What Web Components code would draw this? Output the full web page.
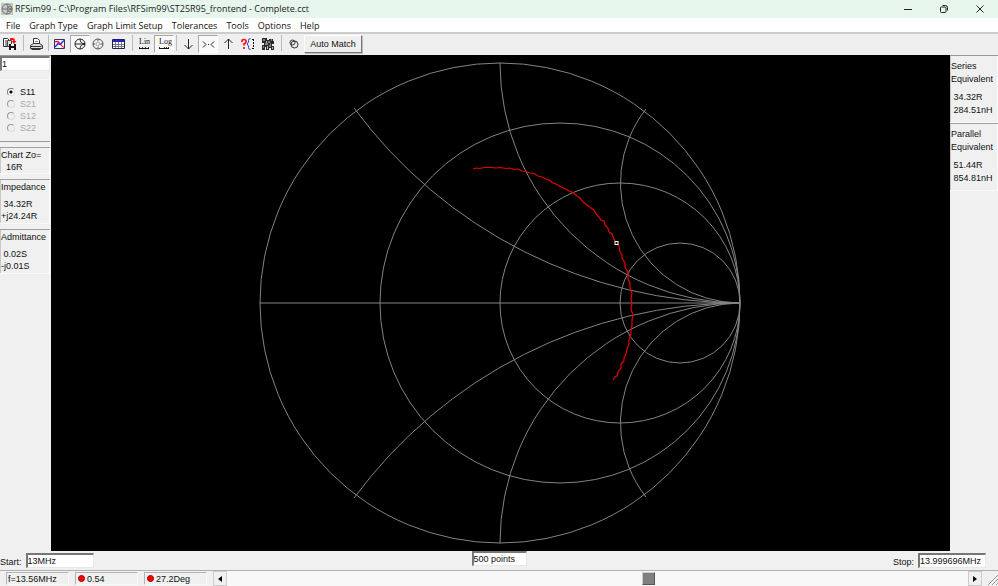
<!DOCTYPE html>
<html lang="en">
<head>
<meta charset="utf-8">
<title>RFSim99</title>
<style>
html,body{height:100%;margin:0}
body{font:9px/12px "Liberation Sans",Arial,sans-serif;color:#111;background:#f0f0f0;--ui:"Open Sans","Noto Sans",sans-serif}
</style>
</head>
<body>
<rf-app></rf-app>
<script>
const define = (name, html, setup) => {
  const tpl = document.createElement('template');
  tpl.innerHTML = html;
  customElements.define(name, class extends HTMLElement {
    constructor() {
      super();
      this.attachShadow({mode: 'open'}).appendChild(tpl.content.cloneNode(true));
    }
    connectedCallback() { if (setup) setup(this, this.shadowRoot); }
  });
};

define('rf-titlebar', `
<style>
:host{display:flex;align-items:center;height:18px;background:#e6f6ec;font:9px/18px var(--ui);color:#1b1b1b}
.app{width:12px;height:12px;margin:0 2px 0 1px;flex:none}
h1{font:inherit;margin:0;flex:1;white-space:nowrap;overflow:hidden}
button{width:36px;height:18px;padding:0;border:0;background:none;display:grid;place-items:center}
</style>
<svg class="app" viewBox="0 0 12 12"><rect width="12" height="12" fill="#c4c8c5"/><g fill="none" stroke="#777"><circle cx="6" cy="6" r="5"/><path d="M1 6h10M6 1q0 4 5 5q-5 1-5 5"/><circle cx="8.500" cy="6" r="2.500"/></g></svg>
<h1><slot></slot></h1>
<button aria-label="Minimize"><svg width="10" height="10"><path d="M1 5.500h8" stroke="#222"/></svg></button>
<button aria-label="Restore"><svg width="10" height="10" fill="none" stroke="#222"><rect x="1.500" y="3" width="5.500" height="5.500" rx="1"/><path d="M3.500 1.500h3q2 0 2 2v3"/></svg></button>
<button aria-label="Close"><svg width="10" height="10"><path d="M1.500 1.500l7 7m0-7l-7 7" stroke="#222"/></svg></button>`);

define('rf-menubar', `
<style>
:host{display:flex;gap:9px;height:14px;padding:0 6px;background:#fff;border-bottom:2px solid #ccc;font:9px/15px var(--ui)}
::slotted(button){font:inherit;color:#111;background:none;border:0;padding:0;white-space:nowrap}
</style><slot></slot>`);

const icons = {
  copy: '<path d="M1.500 2.500h4l2 2v6h-6z" fill="#fff" stroke="#333"/><path d="M3 5h2M3 7h3M3 9h2" stroke="#333"/><path d="M5.500 4.500h4v6h-4z" fill="#ddd" stroke="#444"/><path d="M8 2h3q2 0 2 3h1.500L12 8L9.500 5H11V4H8z" fill="#f11"/><path d="M7 8h7v6H7z" fill="#111"/><path d="M9 8h3v2H9zM9 12h3v2H9z" fill="#fff"/>',
  print: '<path d="M5.500 8V2.500h4l2 2V8" fill="#fff" stroke="#333"/><path d="M7 5.500h3M7 7.500h3" stroke="#888"/><path d="M2.500 9.500l3-2h6l3 2v3h-12z" fill="#ddd" stroke="#333"/><path d="M2.500 10.500h11M3.500 13.500h9" stroke="#333" fill="none"/>',
  graph: '<path d="M2.500 3.500h10v9h-10z" fill="#fff" stroke="#335"/><path d="M3 8h9M6 4v8M9.500 4v8" stroke="#dde8f4" fill="none"/><path d="M3 6q3-1.500 5 1.500t4 4" stroke="#f11" stroke-width="1.300" fill="none"/><path d="M3 11L6 7.500l2 1L12 4.500" stroke="#22e" stroke-width="1.300" fill="none"/>',
  smith: '<g fill="none" stroke="#222"><circle cx="8" cy="8" r="5"/><path d="M3 8h10M8 3q0 4.500 5 5q-5 .5-5 5"/></g>',
  polar: '<g fill="none" stroke="#555"><circle cx="6" cy="8" r="5"/><circle cx="6" cy="8" r="2" stroke-dasharray="1 1"/><path d="M1 8h2M9 8h2M6 3v2M6 11v2"/></g>',
  table: '<path d="M.5 3.500h12v9H.5z" fill="#fff" stroke="#224"/><path d="M1 4h11v2H1z" fill="#22c"/><path d="M1 8.500h11M1 10.500h11M3.500 6v6M6.500 6v6M9.500 6v6" stroke="#778"/>',
  lin: '<path d="M3 12.500h10" stroke="#111"/><path d="M3.500 11v1M6.500 11v1M9.500 11v1M12.500 11v1" stroke="#333"/>',
  log: '<path d="M3 12.500h10" stroke="#111"/><path d="M3.500 11v1M8.500 11v1M10.500 11v1M12.500 11v1" stroke="#333"/>',
  down: '<path d="M8.500 3v10M4.500 9l4 4l4-4" fill="none" stroke="#222"/>',
  merge: '<path d="M3 5.500l3 3l-3 3M14 5.500l-3 3l3 3M8 8.500h1" fill="none" stroke="#222"/>',
  up: '<path d="M8.500 13V3M4.500 7l4-4l4 4" fill="none" stroke="#222"/>',
  query: '<path d="M2 6V5Q2 3.500 4 3.500t2 2t-2 2.500v1.500M4 11v2" fill="none" stroke="#f11" stroke-width="1.700"/><path d="M10.500 2.500q-2 0-2 2V6L7 8l1.500 2v1.500q0 2 2 2" fill="none" stroke="#33d"/><path d="M12 3.500h2M12 12.500h2" stroke="#111"/><path d="M13.500 3v10" stroke="#111" stroke-dasharray="2 1"/>',
  blocks: '<path d="M2 2h5v2h2V3h4v2h1v3h-2v2h2v4h-3v-2H9v2H6v-3H5v3H2V9h2V7H2z" fill="#2a2a2a"/><path d="M3 4h2M8 6h2M11 4h1M5 8h3M9 10h2M3 11h1M10 8h1" stroke="#ddd"/><path d="M6.500 5v2M12.500 11v2M7.500 10v3" stroke="#bbb"/>',
  tune: '<g fill="none" stroke="#333"><circle cx="6.500" cy="6.500" r="2.500"/><circle cx="8.500" cy="8.500" r="3.500"/></g>'
};
define('rf-tool', `
<style>
:host{display:block;width:20px;height:18px;flex:none}
button{box-sizing:border-box;width:100%;height:100%;padding:0;border:1px solid transparent;background:none;display:grid;place-items:center}
:host([pressed]) button{background:#f9f9f9;border-color:#a8a8a8 #fff #fff #a8a8a8}
svg{width:16px;height:16px}
text{font:8px "Liberation Serif",serif;fill:#111}
</style><button><svg viewBox="0 0 16 16"></svg></button>`, (el, root) => {
  const name = el.getAttribute('icon'), cap = el.getAttribute('caption');
  root.querySelector('button').setAttribute('aria-label', name);
  root.querySelector('svg').innerHTML = icons[name] + (cap ? '<text x="3" y="8">' + cap + '</text>' : '');
});

define('rf-toolbar', `
<style>
:host{box-sizing:border-box;display:flex;align-items:flex-start;height:21px;padding-top:1px;background:#efefef}
i{width:6px;height:16px;flex:none;background:linear-gradient(#bbb,#bbb) center/1px 100% no-repeat}
i.s{width:4px}
.match{height:18px;width:58px;margin:0;padding:0;font:inherit;color:inherit;background:#efefef;border:1px solid;border-color:#fff #777 #777 #fff;box-shadow:1px 1px #bbb;white-space:nowrap}
</style>
<rf-tool icon="copy"></rf-tool><i></i><rf-tool icon="print"></rf-tool><i class="s"></i>
<rf-tool icon="graph"></rf-tool><rf-tool icon="smith" pressed></rf-tool><rf-tool icon="polar"></rf-tool><rf-tool icon="table"></rf-tool><i class="s"></i>
<rf-tool icon="lin" caption="Lin"></rf-tool><rf-tool icon="log" caption="Log" pressed></rf-tool><i class="s"></i>
<rf-tool icon="down"></rf-tool><rf-tool icon="merge" pressed></rf-tool><rf-tool icon="up"></rf-tool><rf-tool icon="query"></rf-tool><rf-tool icon="blocks"></rf-tool><i></i>
<rf-tool icon="tune"></rf-tool><button class="match">Auto Match</button>`);

define('rf-readout', `
<style>
:host{display:block;padding:1px 0 2px 1px;border-top:1px solid #a0a0a0;box-shadow:inset -1px -1px #fafafa,inset 1px 0 #c8c8c8;white-space:nowrap}
.v{margin-top:5px}
:host([tight]) .v{margin-top:0}
::slotted(div){white-space:pre}
</style><slot name="title"></slot><div class="v"><slot></slot></div>`);

define('rf-field', `
<style>
:host{display:flex;gap:4px;align-items:flex-end}
label:empty{display:none}
label{line-height:12px}
input{box-sizing:border-box;width:var(--w,68px);height:15px;padding:0 0 1px 0;font:inherit;line-height:12px;color:inherit;background:#fff;border:1px solid;border-color:#777 #e8e8e8 #e8e8e8 #777;border-width:2px 1px 1px 2px;border-radius:0;outline:0}
</style><label for="f"></label><input id="f">`, (el, root) => {
  root.querySelector('label').textContent = el.getAttribute('label') || '';
  const input = root.querySelector('input');
  input.value = el.getAttribute('value');
  if (!el.hasAttribute('label')) input.setAttribute('aria-label', el.getAttribute('name'));
});

define('rf-ports', `
<style>
:host{display:block;margin-top:8px;padding:7px 0 7px 7px;border-bottom:1px solid #999;box-shadow:inset 0 1px #f8f8f8}
label{display:flex;align-items:center;gap:5px;height:12px}
label.off{color:#aaa}
input{appearance:none;box-sizing:border-box;width:8px;height:8px;margin:0;border:1px solid;border-color:#777 #ddd #ddd #777;border-radius:50%;background:#fff}
input:disabled{background:#f0f0f0;border-color:#999 #ddd #ddd #999}
input:checked{background:radial-gradient(circle,#000 0 1px,#fff 2px)}
</style>
<label><input type="radio" name="p" checked>S11</label>
<label class="off"><input type="radio" name="p" disabled>S21</label>
<label class="off"><input type="radio" name="p" disabled>S12</label>
<label class="off"><input type="radio" name="p" disabled>S22</label>`);

define('rf-smith-chart', `
<style>
:host{display:block;background:#000;min-width:0;min-height:0;overflow:hidden}
svg{display:block;width:100%;height:100%}
</style>
<svg viewBox="51 55 899 496" role="img" aria-label="Smith chart">
<g fill="none" stroke="#848484">
<circle cx="500" cy="303" r="240"/><circle cx="560" cy="303" r="180"/><circle cx="620" cy="303" r="120"/><circle cx="680" cy="303" r="60"/>
<path d="M260 303H740"/>
<path d="M354 108A480 480 0 0 0 740 303A480 480 0 0 0 354 498"/>
<path d="M500 63A240 240 0 0 0 740 303A240 240 0 0 0 500 543"/>
<path d="M646 109A120 120 0 0 0 740 303A120 120 0 0 0 646 497"/>
</g>
<path fill="none" stroke="#e80000" stroke-width="1.200" d="M473 169L476 168L480 168.500L484 167.500L492 167.500L496 168L500 167.500L506 168.500L510 168L514 169.500L518 169L522 171L526 171.500L530 173L534 173.500L538 176L542 177L546 179L549 180L553 183L557 184.500L561 187L565 188.500L569 191L573 192.500L577 196L580 198L583 202L587 205L591 208L594 210L596 214L599 217L601 220L604 221L605 225L608 228L609 232L612 234L614 239L616 243L619 246L620 252L622 255L622 258L625 263L625 267L628 273L628 279L630 283L630 288L632 293L631 299L632 303L631 309L633 315L632 320L632 326L631 330L631 334L629 340L629 344L627 349L626 354L624 358L624 361L621 364L621 368L618 372L617 376L615 377L613 380"/>
<rect x="615" y="241.500" width="3" height="3" fill="#200" stroke="#fff"/>
</svg>`);

define('rf-cell', `
<style>
:host{box-sizing:border-box;display:flex;align-items:center;gap:2px;width:63px;height:13px;padding:0 2px;border:1px solid;border-color:#b4b4b4 #fafafa #fafafa #b4b4b4;white-space:nowrap;flex:none}
i{display:none;box-sizing:border-box;width:7px;height:7px;border:1px solid #900;border-radius:50%;background:#f00}
:host([dot]) i{display:block}
:host(:not([dot])){padding:0 1px}
</style><i></i><slot></slot>`);

define('rf-statusbar', `
<style>
:host{display:flex;align-items:center;gap:6px;height:15px;padding-left:6px;border-top:1px solid #b0b0b0}
.scroll{flex:1;display:flex;height:15px;min-width:0}
button{box-sizing:border-box;width:14px;height:15px;padding:0;border:1px solid;border-color:#fff #777 #777 #fff;outline:1px solid #ccc;outline-offset:-1px;background:#f0f0f0;display:grid;place-items:center;flex:none}
input{appearance:none;flex:1;min-width:0;height:15px;margin:0;background:#f8f8f8}
input::-webkit-slider-thumb{appearance:none;width:13px;height:13px;background:#808080;border:1px solid;border-color:#ccc #555 #555 #ccc;border-radius:0;box-sizing:border-box}
.grip{width:10px;height:13px;align-self:flex-end}
</style>
<rf-cell>f=13.56MHz</rf-cell><rf-cell dot>0.54</rf-cell><rf-cell dot>27.2Deg</rf-cell>
<div class="scroll"><button aria-label="Back"><svg width="6" height="8"><path d="M5 1v6L1 4z"/></svg></button><input type="range" aria-label="Frequency" min="0" max="100" value="57"><button aria-label="Forward"><svg width="6" height="8"><path d="M1 1v6l4-3z"/></svg></button></div>
<svg class="grip" viewBox="0 0 10 13"><path d="M0 12L10 2M4 12l6-6M8 12l2-2" stroke="#999"/></svg>`);

define('rf-app', `
<style>
:host{display:flex;flex-direction:column;height:100%}
main{flex:1;min-height:0;display:grid;grid-template-columns:51px minmax(0,1fr) 48px}
aside{border-top:1px solid #999;min-height:0}
.left{padding-right:1px}
.left rf-readout{margin-top:5px}
.left rf-readout[tight]{padding-bottom:1px}
.right{line-height:13px}
.right rf-readout{padding:4px 0 6px 1px}
.right rf-readout:first-child{border-top:0}
.sweep{display:grid;grid-template-columns:1fr auto 1fr;height:19px;padding:0 12px 0 0}
.sweep rf-field{align-self:end;margin-bottom:2px}
.sweep .mid{align-self:start;margin:0 0 0 12px}
.end{justify-self:end}
</style>
<rf-titlebar>RFSim99 - C:\\Program Files\\RFSim99\\ST25R95_frontend - Complete.cct</rf-titlebar>
<rf-menubar><button>File</button><button>Graph Type</button><button>Graph Limit Setup</button><button>Tolerances</button><button>Tools</button><button>Options</button><button>Help</button></rf-menubar>
<rf-toolbar></rf-toolbar>
<main>
<aside class="left">
<rf-field name="Marker" value="1" style="--w:50px"></rf-field>
<rf-ports></rf-ports>
<rf-readout tight><div slot="title">Chart Zo=</div><div>  16R</div></rf-readout>
<rf-readout><div slot="title">Impedance</div><div> 34.32R</div><div>+j24.24R</div></rf-readout>
<rf-readout><div slot="title">Admittance</div><div> 0.02S</div><div>-j0.01S</div></rf-readout>
</aside>
<rf-smith-chart></rf-smith-chart>
<aside class="right">
<rf-readout><div slot="title">Series<br>Equivalent</div><div> 34.32R</div><div> 284.51nH</div></rf-readout>
<rf-readout><div slot="title">Parallel<br>Equivalent</div><div> 51.44R</div><div> 854.81nH</div></rf-readout>
</aside>
</main>
<div class="sweep"><rf-field label="Start:" value="13MHz"></rf-field><rf-field class="mid" name="Points" value="500 points" style="--w:55px"></rf-field><rf-field class="end" label="Stop:" value="13.999696MHz"></rf-field></div>
<rf-statusbar></rf-statusbar>`);
</script>
</body>
</html>
